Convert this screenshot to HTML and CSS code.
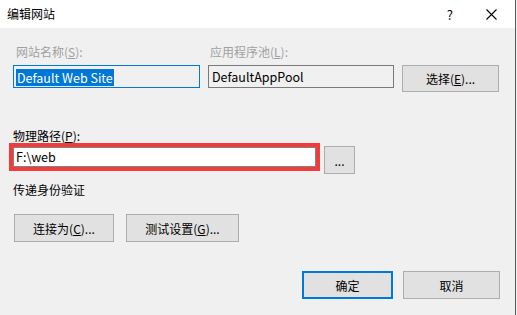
FILE: index.html
```html
<!DOCTYPE html>
<html lang="zh-CN">
<head>
  <meta charset="UTF-8">
  <meta name="viewport" content="width=device-width, initial-scale=1.0">
  <title>编辑网站</title>
  <link rel="stylesheet" href="styles.css">
</head>
<body>
  <div class="dialog">
    <div class="titlebar">
      <span class="title">编辑网站</span>
      <span class="help">?</span>
      <span class="close">
        <svg width="11" height="11" viewBox="0 0 11 11"><path d="M0.5 0.5 L10.5 10.5 M10.5 0.5 L0.5 10.5" stroke="#000" stroke-width="1.1" fill="none"/></svg>
      </span>
    </div>

    <div class="content">
      <div class="row labels">
        <span class="label disabled site-label">网站名称(<u>S</u>):</span>
        <span class="label disabled">应用程序池(<u>L</u>):</span>
      </div>
      <div class="row fields">
        <div class="textbox readonly site"><span class="sel">Default Web Site</span></div>
        <div class="textbox readonly pool">DefaultAppPool</div>
        <button class="btn select">选择(<u>E</u>)...</button>
      </div>

      <div class="label path-label">物理路径(<u>P</u>):</div>
      <div class="row path-row">
        <div class="mark">
          <div class="textbox path">F:\web</div>
        </div>
        <button class="btn browse">...</button>
      </div>

      <div class="label auth">传递身份验证</div>
      <div class="row actions">
        <button class="btn connect">连接为(<u>C</u>)...</button>
        <button class="btn test">测试设置(<u>G</u>)...</button>
      </div>

      <!-- 底部按钮 -->
      <div class="row footer">
        <button class="btn ok">确定</button>
        <button class="btn cancel">取消</button>
      </div>
    </div>
  </div>
</body>
</html>
```

FILE: styles.css
```css
body {
  margin: 0;
  background-color: #f0f0f0;
  font-family: "Noto Sans CJK SC", "Noto Sans", sans-serif;
  font-size: 12px;
  color: #000;
}

.dialog {
  width: 515px;
  height: 315px;
  background-color: #f0f0f0;
  border-right: 1px solid #5a5a5a;
}

.titlebar {
  height: 28px;
  background-color: #fff;
  display: flex;
  align-items: center;
}
.title {
  padding-left: 7px;
  line-height: 16px;
}
.help {
  margin-left: auto;
  margin-right: 33px;
  font-size: 13px;
}
.close {
  display: flex;
  margin-right: 18px;
}

.content {
  padding: 16px 15px 0 13px;
}

.row {
  display: flex;
  align-items: flex-start;
}

.label {
  line-height: 16px;
}
.disabled {
  color: #a0a0a0;
}
.site-label {
  width: 192px;
  padding-left: 3px;
}
.labels .label + .label {
  padding-left: 2px;
}

.fields {
  margin-top: 5px;
}

.textbox {
  box-sizing: border-box;
  background-color: #fff;
  border: 1px solid #7a7a7a;
  white-space: nowrap;
  font-size: 12.5px;
}
.readonly {
  background-color: #f0f0f0;
}
.site {
  width: 187px;
  height: 23px;
  padding: 2px 0 0 2px;
  border-color: #0078d7;
}
.sel {
  display: inline-block;
  background-color: #0078d7;
  color: #fff;
  line-height: 17px;
  padding: 0 1px;
}
.pool {
  width: 186px;
  height: 23px;
  margin-left: 8px;
  padding-left: 3px;
  line-height: 21px;
}

.btn {
  box-sizing: border-box;
  background-color: #e1e1e1;
  border: 1px solid #adadad;
  font-family: inherit;
  font-size: 12px;
  color: #000;
  padding: 0;
  height: 28px;
}
.select {
  width: 97px;
  height: 27px;
  margin-left: 8px;
}

.path-label {
  margin-top: 36px;
  line-height: 15px;
}
.mark {
  margin-left: -4px;
  border: 4px solid #f23c3c;
}
.path {
  width: 303px;
  height: 20px;
  padding-left: 2px;
  line-height: 18px;
  border-color: #838383;
}
.browse {
  width: 31px;
  margin-left: 4px;
  margin-top: 3px;
}

.auth {
  margin-top: 8px;
}

.actions {
  margin-top: 16px;
}
.connect {
  width: 100px;
  margin-left: 1px;
}
.test {
  width: 113px;
  margin-left: 12px;
}

.footer {
  margin-top: 29px;
  justify-content: flex-end;
}
.ok {
  width: 91px;
  border: 2px solid #0078d7;
}
.cancel {
  width: 97px;
  margin-left: 10px;
}
```
